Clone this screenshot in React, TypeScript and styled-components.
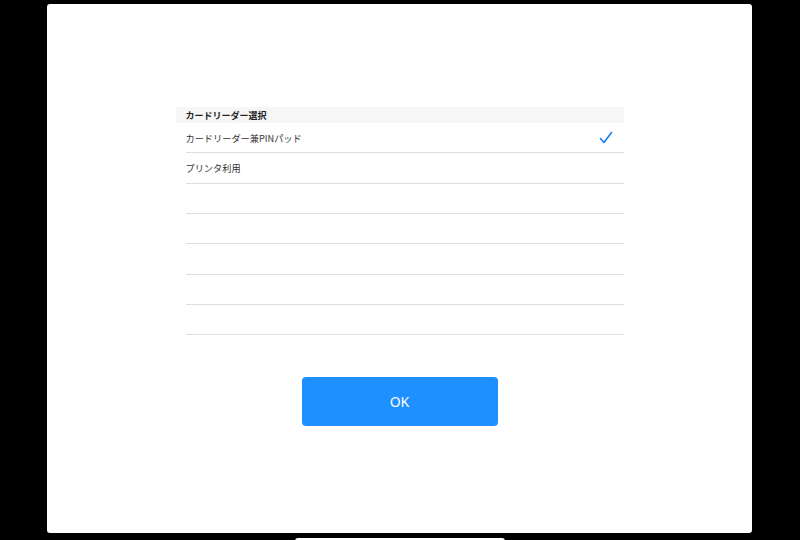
import React from "react";
import styled, { createGlobalStyle } from "styled-components";

const Global = createGlobalStyle`
  html, body { margin: 0; padding: 0; background: #000; overflow: hidden; }
  body { font-family: "Noto Sans CJK JP", "Noto Sans", sans-serif; }
`;

const Screen = styled.div`
  width: 800px;
  height: 540px;
  background: #000;
  display: flex;
  flex-direction: column;
  align-items: center;
  padding-top: 4px;
  box-sizing: border-box;
  overflow: hidden;
`;

const Panel = styled.div`
  width: 705px;
  height: 529px;
  margin-left: -1px;
  background: #fff;
  border-radius: 3px;
  display: flex;
  flex-direction: column;
  align-items: center;
  padding-top: 103px;
  box-sizing: border-box;
  flex-shrink: 0;
`;

const HomeBar = styled.div`
  margin-top: 5px;
  width: 210px;
  height: 6px;
  background: #fff;
  border-radius: 3px;
  flex-shrink: 0;
`;

const Section = styled.div`
  width: 448px;
  display: flex;
  flex-direction: column;
`;

const SectionHeader = styled.div`
  height: 16px;
  background: #f6f6f6;
  padding-left: 10px;
  display: flex;
  align-items: center;
  font-size: 9px;
  font-weight: 700;
  color: #222;
`;

const Row = styled.div`
  height: 30.35px;
  margin-left: 10px;
  border-bottom: 1px solid #dedede;
  box-sizing: border-box;
  display: flex;
  align-items: center;
  justify-content: space-between;
  padding-right: 11px;
  font-size: 9.2px;
  color: #333;
`;

const Check = styled.svg`
  width: 14px;
  height: 14px;
  display: block;
`;

const OkButton = styled.button`
  margin-top: 42px;
  width: 196px;
  height: 49px;
  border: none;
  border-radius: 4px;
  background: #1e90ff;
  color: #fff;
  font-family: "Noto Sans", "Liberation Sans", sans-serif;
  font-size: 14px;
  padding: 0;
`;

const items = [
  { label: "カードリーダー兼PINパッド", checked: true },
  { label: "プリンタ利用", checked: false },
  { label: "", checked: false },
  { label: "", checked: false },
  { label: "", checked: false },
  { label: "", checked: false },
  { label: "", checked: false },
];

export default function App() {
  return (
    <>
      <Global />
      <Screen>
        <Panel>
          <Section>
            <SectionHeader>カードリーダー選択</SectionHeader>
            {items.map((it, i) => (
              <Row key={i}>
                <span>{it.label}</span>
                {it.checked && (
                  <Check viewBox="0 0 14 14">
                    <path
                      d="M1.5 7.5 L5 11.5 L12.5 1.5"
                      fill="none"
                      stroke="#1a7cf2"
                      strokeWidth="1.6"
                      strokeLinecap="round"
                      strokeLinejoin="round"
                    />
                  </Check>
                )}
              </Row>
            ))}
          </Section>
          <OkButton>OK</OkButton>
        </Panel>
        <HomeBar />
      </Screen>
    </>
  );
}
